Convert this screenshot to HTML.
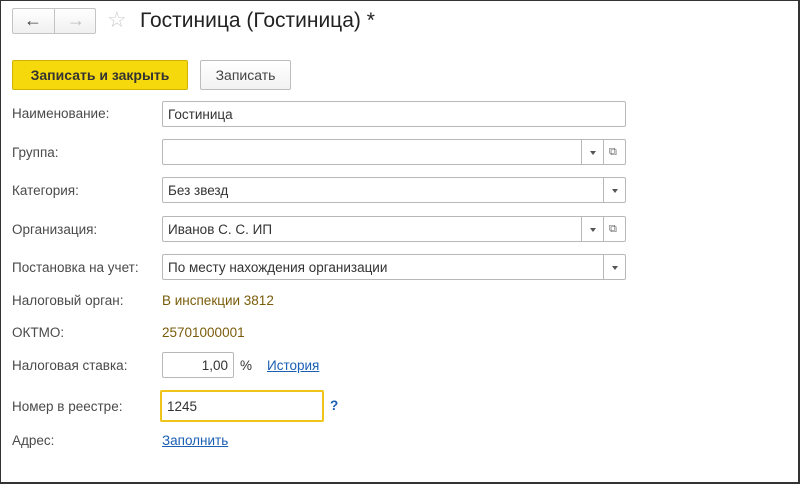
<!DOCTYPE html>
<html><head><meta charset="utf-8"><style>
*{box-sizing:border-box;margin:0;padding:0}
body{width:800px;height:484px;background:#fff;font-family:"Liberation Sans",Arial,sans-serif;font-size:13.5px;color:#444;position:relative;overflow:hidden}
.frame{position:absolute;left:0;top:0;width:800px;height:484px;border:1px solid #333;border-right-width:2px;border-bottom-width:2px}
.a{position:absolute}
.lbl{position:absolute;left:12px;color:#4a4a4a}
.in{position:absolute;border:1px solid #b8b8b8;border-radius:2px;background:#fff;height:26px;padding:5px 5px;color:#333;line-height:15px}
.btn{position:absolute;border-left:1px solid #b8b8b8;top:0;bottom:0;width:22px}
.tri{position:absolute;left:8px;top:11px;width:0;height:0;border-left:3px solid transparent;border-right:3px solid transparent;border-top:4px solid #555}
.val{position:absolute;left:162px;color:#7a5c0a}
a{color:#1a5fb4;text-decoration:underline}
</style></head><body>
<div class="frame"></div>
<div class="a" style="left:12px;top:8px;width:84px;height:26px;border:1px solid #c4c4c4;border-radius:2px;background:linear-gradient(#fff,#f0f0f0)">
 <div class="a" style="left:41px;top:0;bottom:0;border-left:1px solid #c4c4c4"></div>
 <span class="a" style="left:11px;top:1px;font-size:18px;color:#444;font-weight:bold">&#8592;</span>
 <span class="a" style="left:54px;top:1px;font-size:18px;color:#bbb;font-weight:bold">&#8594;</span>
</div>
<span class="a" style="left:107px;top:7px;font-size:22px;color:#ccc">&#9734;</span>
<div class="a" style="left:140px;top:9px;font-size:21px;color:#222">Гостиница (Гостиница) *</div>
<div class="a" style="left:12px;top:60px;width:176px;height:30px;background:#f6d90c;border:1px solid #cfb300;border-radius:2px;color:#333;font-weight:bold;font-size:14px;text-align:center;line-height:28px">Записать и закрыть</div>
<div class="a" style="left:200px;top:60px;width:91px;height:30px;background:linear-gradient(#fff,#f2f2f2);border:1px solid #bdbdbd;border-radius:2px;color:#444;font-size:14px;text-align:center;line-height:28px">Записать</div>

<div class="lbl" style="top:106px">Наименование:</div>
<div class="in" style="left:162px;top:101px;width:464px">Гостиница</div>
<div class="lbl" style="top:145px">Группа:</div>
<div class="in" style="left:162px;top:139px;width:464px"><div class="btn" style="right:22px"><div class="tri"></div></div><div class="btn" style="right:0;font-size:11px;color:#666;padding:5px 0 0 5px">&#10697;</div></div>
<div class="lbl" style="top:183px">Категория:</div>
<div class="in" style="left:162px;top:177px;width:464px">Без звезд<div class="btn" style="right:0"><div class="tri"></div></div></div>
<div class="lbl" style="top:222px">Организация:</div>
<div class="in" style="left:162px;top:216px;width:464px">Иванов С. С. ИП<div class="btn" style="right:22px"><div class="tri"></div></div><div class="btn" style="right:0;font-size:11px;color:#666;padding:5px 0 0 5px">&#10697;</div></div>
<div class="lbl" style="top:260px">Постановка на учет:</div>
<div class="in" style="left:162px;top:254px;width:464px">По месту нахождения организации<div class="btn" style="right:0"><div class="tri"></div></div></div>
<div class="lbl" style="top:293px">Налоговый орган:</div>
<div class="val" style="top:293px">В инспекции 3812</div>
<div class="lbl" style="top:325px">ОКТМО:</div>
<div class="val" style="top:325px">25701000001</div>
<div class="lbl" style="top:358px">Налоговая ставка:</div>
<div class="in" style="left:162px;top:352px;width:72px;text-align:right">1,00</div>
<div class="a" style="left:240px;top:358px;color:#333">%</div>
<div class="a" style="left:267px;top:358px"><a>История</a></div>
<div class="lbl" style="top:399px">Номер в реестре:</div>
<div class="in" style="left:160px;top:390px;width:164px;height:32px;border:2px solid #f0c419;padding-top:7px">1245</div>
<div class="a" style="left:330px;top:398px;color:#1a5fb4;font-weight:bold">?</div>
<div class="lbl" style="top:433px">Адрес:</div>
<div class="a" style="left:162px;top:433px"><a>Заполнить</a></div>
</body></html>
